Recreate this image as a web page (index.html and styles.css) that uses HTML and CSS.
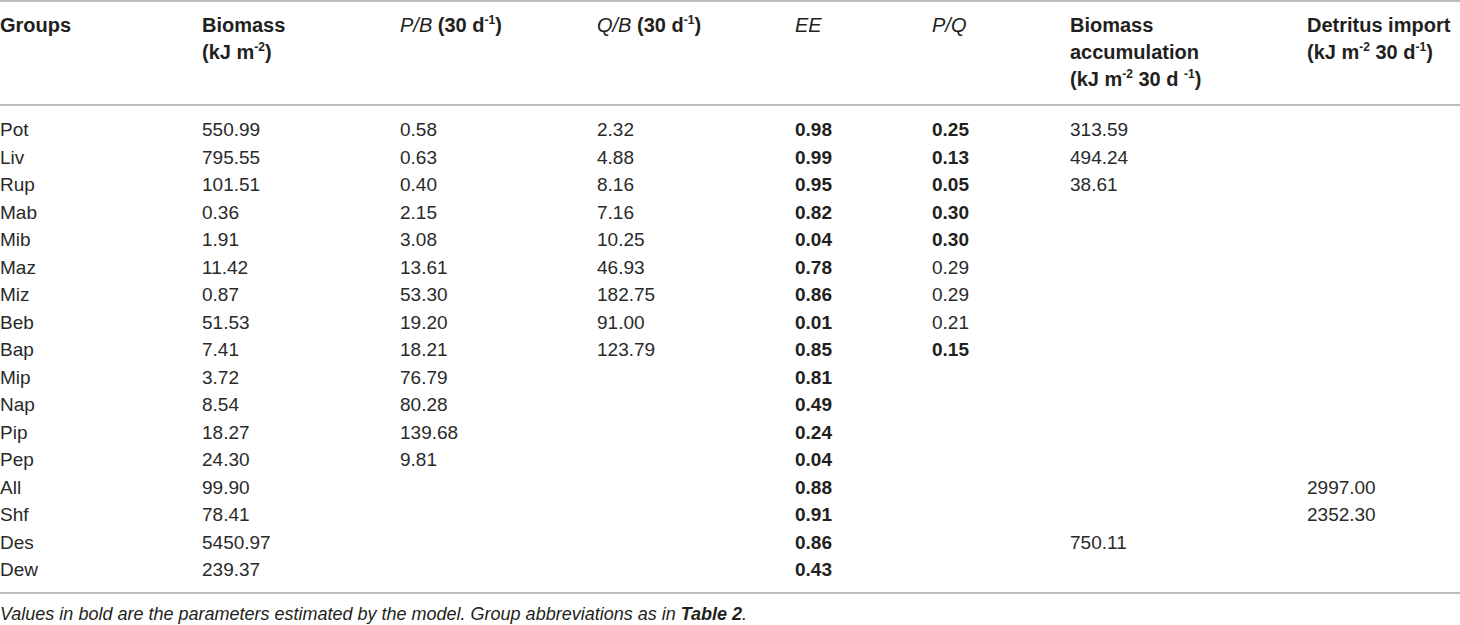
FILE: index.html
```html
<!DOCTYPE html>
<html lang="en">
<head>
    <meta charset="UTF-8">
    <title>Ecopath parameters</title>
    <link rel="stylesheet" href="styles.css">
</head>
<body>
    <table class="tabla">
        <colgroup>
            <col style="width: 202px">
            <col style="width: 198px">
            <col style="width: 197px">
            <col style="width: 198px">
            <col style="width: 137px">
            <col style="width: 138px">
            <col style="width: 237px">
            <col style="width: 153px">
        </colgroup>
        <thead>
            <tr>
                <th>Groups</th>
                <th>Biomass<br>(kJ m<sup>-2</sup>)</th>
                <th><i>P/B</i> (30 d<sup>-1</sup>)</th>
                <th><i>Q/B</i> (30 d<sup>-1</sup>)</th>
                <th><i>EE</i></th>
                <th><i>P/Q</i></th>
                <th>Biomass<br>accumulation<br>(kJ m<sup>-2</sup> 30 d <sup>-1</sup>)</th>
                <th>Detritus import<br>(kJ m<sup>-2</sup> 30 d<sup>-1</sup>)</th>
            </tr>
        </thead>
        <tbody>
            <tr><td>Pot</td><td>550.99</td><td>0.58</td><td>2.32</td><td><b>0.98</b></td><td><b>0.25</b></td><td>313.59</td><td></td></tr>
            <tr><td>Liv</td><td>795.55</td><td>0.63</td><td>4.88</td><td><b>0.99</b></td><td><b>0.13</b></td><td>494.24</td><td></td></tr>
            <tr><td>Rup</td><td>101.51</td><td>0.40</td><td>8.16</td><td><b>0.95</b></td><td><b>0.05</b></td><td>38.61</td><td></td></tr>
            <tr><td>Mab</td><td>0.36</td><td>2.15</td><td>7.16</td><td><b>0.82</b></td><td><b>0.30</b></td><td></td><td></td></tr>
            <tr><td>Mib</td><td>1.91</td><td>3.08</td><td>10.25</td><td><b>0.04</b></td><td><b>0.30</b></td><td></td><td></td></tr>
            <tr><td>Maz</td><td>11.42</td><td>13.61</td><td>46.93</td><td><b>0.78</b></td><td>0.29</td><td></td><td></td></tr>
            <tr><td>Miz</td><td>0.87</td><td>53.30</td><td>182.75</td><td><b>0.86</b></td><td>0.29</td><td></td><td></td></tr>
            <tr><td>Beb</td><td>51.53</td><td>19.20</td><td>91.00</td><td><b>0.01</b></td><td>0.21</td><td></td><td></td></tr>
            <tr><td>Bap</td><td>7.41</td><td>18.21</td><td>123.79</td><td><b>0.85</b></td><td><b>0.15</b></td><td></td><td></td></tr>
            <tr><td>Mip</td><td>3.72</td><td>76.79</td><td></td><td><b>0.81</b></td><td></td><td></td><td></td></tr>
            <tr><td>Nap</td><td>8.54</td><td>80.28</td><td></td><td><b>0.49</b></td><td></td><td></td><td></td></tr>
            <tr><td>Pip</td><td>18.27</td><td>139.68</td><td></td><td><b>0.24</b></td><td></td><td></td><td></td></tr>
            <tr><td>Pep</td><td>24.30</td><td>9.81</td><td></td><td><b>0.04</b></td><td></td><td></td><td></td></tr>
            <tr><td>All</td><td>99.90</td><td></td><td></td><td><b>0.88</b></td><td></td><td></td><td>2997.00</td></tr>
            <tr><td>Shf</td><td>78.41</td><td></td><td></td><td><b>0.91</b></td><td></td><td></td><td>2352.30</td></tr>
            <tr><td>Des</td><td>5450.97</td><td></td><td></td><td><b>0.86</b></td><td></td><td>750.11</td><td></td></tr>
            <tr><td>Dew</td><td>239.37</td><td></td><td></td><td><b>0.43</b></td><td></td><td></td><td></td></tr>
        </tbody>
    </table>
    <p class="nota">Values in bold are the parameters estimated by the model. Group abbreviations as in <b>Table 2</b>.</p>
</body>
</html>
```

FILE: styles.css
```css
body {
    font-family: "Liberation Sans", Arial, sans-serif;
    color: #231f20;
    margin: 0;
    background-color: white;
}
.tabla {
    width: 1460px;
    border-collapse: collapse;
    table-layout: fixed;
    font-size: 19px;
}
.tabla th {
    text-align: left;
    vertical-align: top;
    font-size: 20px;
    font-weight: bold;
    line-height: 27px;
    padding: 10px 0 11px 0;
    border-top: 2px solid #bcbcbc;
    border-bottom: 2px solid #bcbcbc;
    white-space: nowrap;
}
.tabla th i {
    font-weight: normal;
}
.tabla td {
    padding: 0;
    height: 27.5px;
    line-height: 27.5px;
    white-space: nowrap;
    color: #2a2a2a;
}
.tabla td b {
    color: #231f20;
}
.tabla tbody tr:first-child td {
    padding-top: 10px;
}
.tabla tbody tr:last-child td {
    padding-bottom: 8px;
    border-bottom: 2px solid #bcbcbc;
}
sup {
    font-size: 0.6em;
    line-height: 0;
    vertical-align: 0.65em;
}
.nota {
    margin: 0;
    padding-top: 9px;
    font-size: 18px;
    font-style: italic;
    line-height: 22px;
}
```
